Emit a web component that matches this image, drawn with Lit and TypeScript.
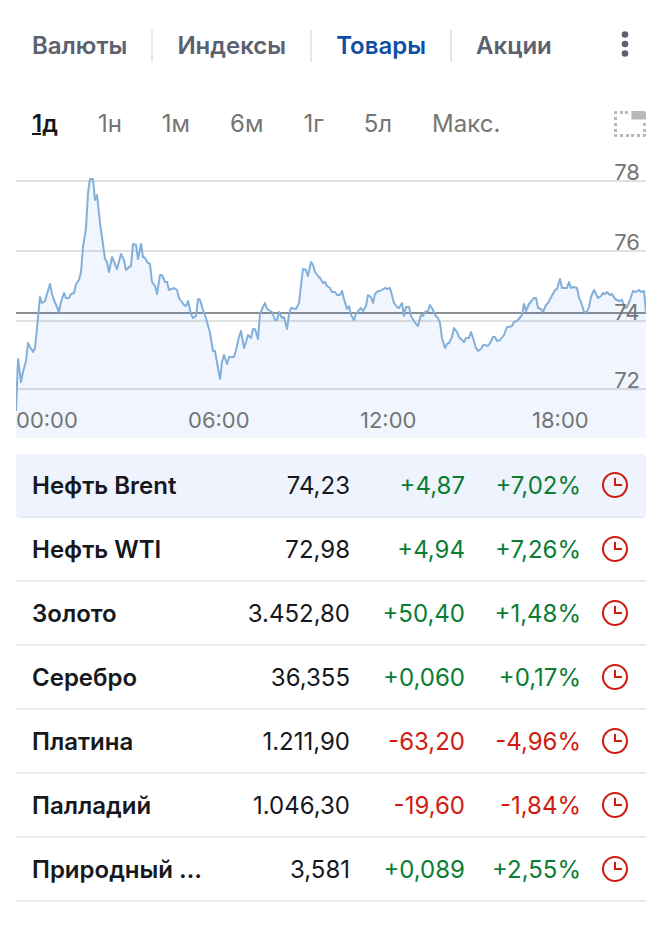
import { LitElement, html, css, svg } from "lit";
import { customElement, property, state } from "lit/decorators.js";
import { classMap } from "lit/directives/class-map.js";

interface Quote {
  name: string;
  price: string;
  change: string;
  percent: string;
}

const TABS = ["Валюты", "Индексы", "Товары", "Акции"];
const RANGES = ["1д", "1н", "1м", "6м", "1г", "5л", "Макс."];

const QUOTES: Quote[] = [
  { name: "Нефть Brent", price: "74,23", change: "+4,87", percent: "+7,02%" },
  { name: "Нефть WTI", price: "72,98", change: "+4,94", percent: "+7,26%" },
  { name: "Золото", price: "3.452,80", change: "+50,40", percent: "+1,48%" },
  { name: "Серебро", price: "36,355", change: "+0,060", percent: "+0,17%" },
  { name: "Платина", price: "1.211,90", change: "-63,20", percent: "-4,96%" },
  { name: "Палладий", price: "1.046,30", change: "-19,60", percent: "-1,84%" },
  { name: "Природный …", price: "3,581", change: "+0,089", percent: "+2,55%" },
];

// Intraday price line, in the chart's 630 x 278 coordinate space.
const LINE =
  "0,251 2,199 5,222 7,212 10,201 12,183 14,187 17,192 19,188 21,168 24,137 26,143 29,141 31,134 34,124 36,134 38,140 43,152 45,142 48,133 50,138 53,138 55,134 58,133 60,124 63,120 65,112 67,87 70,68 72,33 74,19 77,19 79,40 81,35 84,63 86,77 89,99 91,102 93,112 96,97 101,109 105,94 108,100 110,110 113,107 115,106 117,84 120,85 122,99 125,84 127,97 129,98 132,103 134,104 136,122 139,126 141,134 144,115 146,115 149,122 151,122 153,130 " +
  "158,128 161,130 163,138 168,145 170,146 172,141 175,154 177,158 180,156 182,139 184,140 187,150 190,158 194,173 197,191 199,191 204,219 206,202 208,195 211,204 213,197 218,197 220,190 223,177 225,171 228,188 230,182 232,175 235,178 237,169 239,169 242,179 244,154 247,147 249,143 251,149 256,152 259,160 261,160 263,152 266,158 268,157 271,169 273,154 275,148 280,149 283,143 285,125 287,109 290,110 292,116 295,102 297,105 299,112 302,116 304,118 307,123 309,122 311,126 314,128 " +
  "316,132 319,132 321,135 324,135 326,131 328,139 331,149 333,146 335,155 338,160 340,154 343,150 345,148 347,151 350,146 352,135 355,137 357,143 359,134 362,131 364,131 369,128 371,129 374,128 378,143 381,147 383,148 386,143 388,156 390,147 393,147 395,156 398,161 400,164 402,166 405,155 407,156 409,152 412,151 414,145 417,150 419,155 422,158 424,163 426,178 429,188 431,184 433,183 436,177 438,168 441,172 443,177 448,182 450,178 453,178 455,172 457,178 460,188 462,191 465,189 467,185 469,185 472,186 474,183 477,177 479,177 481,181 " +
  "484,180 488,175 491,167 493,167 496,166 498,162 501,161 506,155 508,144 510,151 513,144 518,138 520,138 522,148 525,149 527,152 530,145 532,143 539,130 541,129 544,119 546,128 551,128 553,122 555,128 558,127 561,128 563,138 565,142 568,152 571,152 573,147 575,137 578,130 580,134 582,138 585,136 587,133 589,134 591,132 594,135 596,134 599,139 603,141 606,140 609,148 611,147 614,140 617,131 620,132 623,130 625,132 628,131 630,153";

@customElement("price-chart")
export class PriceChart extends LitElement {
  static styles = css`
    :host {
      display: grid;
      height: 280px;
      color: #757575;
      font-size: 22px;
      line-height: 28px;
    }
    .plot,
    .prices,
    .times {
      grid-area: 1 / 1;
    }
    .plot {
      display: block;
      align-self: end;
      width: 100%;
      height: 278px;
    }
    .grid {
      stroke: #e0e0e0;
      stroke-width: 2;
    }
    .previous {
      stroke: #8b8f94;
      stroke-width: 2;
    }
    .area {
      fill: #1a66f0;
      fill-opacity: 0.065;
    }
    .line {
      fill: none;
      stroke: #83b0da;
      stroke-width: 2;
      stroke-linejoin: round;
    }
    .prices {
      display: grid;
      grid-template-rows: 70px 70px 68px 28px;
      align-content: start;
      justify-content: end;
      padding-right: 6px;
    }
    .times {
      align-self: end;
      display: grid;
      grid-template-columns: repeat(3, 172fr) 114fr;
      padding-bottom: 4px;
    }
  `;

  render() {
    return html`
      <svg
        class="plot"
        viewBox="0 0 630 278"
        preserveAspectRatio="none"
        role="img"
        aria-label="Нефть Brent, 1д"
      >
        ${[21, 91, 161, 229].map(
          (y) => svg`<line class="grid" x1="0" x2="630" y1=${y} y2=${y} />`
        )}
        <line class="previous" x1="0" x2="630" y1="153" y2="153" />
        <polygon class="area" points="${LINE} 630,278 0,278" />
        <polyline class="line" vector-effect="non-scaling-stroke" points=${LINE} />
      </svg>
      <div class="prices">
        ${[78, 76, 74, 72].map((p) => html`<span>${p}</span>`)}
      </div>
      <div class="times">
        ${["00:00", "06:00", "12:00", "18:00"].map((t) => html`<span>${t}</span>`)}
      </div>
    `;
  }
}

@customElement("quote-table")
export class QuoteTable extends LitElement {
  @property({ attribute: false }) quotes: Quote[] = [];
  @state() private selected = 0;

  static styles = css`
    :host {
      display: block;
    }
    .table {
      width: 100%;
      table-layout: fixed;
      border-collapse: separate;
      border-spacing: 0;
      font-size: 24px;
      line-height: 32px;
      color: #16181d;
    }
    .col-price {
      width: 144px;
    }
    .col-change {
      width: 115px;
    }
    .col-percent {
      width: 116px;
    }
    .col-status {
      width: 65px;
    }
    .row {
      cursor: pointer;
    }
    .cell {
      height: 60px;
      padding: 2px 0 0;
      border-bottom: 2px solid #ebebeb;
      text-align: right;
      font-weight: 400;
      white-space: nowrap;
    }
    .name {
      padding-left: 16px;
      text-align: left;
      font-weight: 600;
    }
    .status {
      height: 62px;
      padding: 0 18px 0 0;
    }
    .up {
      color: #0a7d33;
    }
    .down {
      color: #d01c0f;
    }
    .selected .cell {
      background: #eef3fd;
      border-bottom-color: #e7ebf4;
    }
    .selected .name {
      border-radius: 4px 0 0 4px;
    }
    .selected .status {
      border-radius: 0 4px 4px 0;
    }
    .clock {
      display: block;
      width: 26px;
      height: 26px;
      margin-left: auto;
      fill: none;
      stroke: #d01c0f;
      stroke-width: 2;
    }
  `;

  render() {
    return html`
      <table class="table">
        <colgroup>
          <col />
          <col class="col-price" />
          <col class="col-change" />
          <col class="col-percent" />
          <col class="col-status" />
        </colgroup>
        <tbody>
          ${this.quotes.map((q, i) => {
            const trend = {
              cell: true,
              up: q.change.startsWith("+"),
              down: q.change.startsWith("-"),
            };
            return html`
              <tr
                class=${classMap({ row: true, selected: i === this.selected })}
                @click=${() => (this.selected = i)}
              >
                <th class="cell name" scope="row">${q.name}</th>
                <td class="cell">${q.price}</td>
                <td class=${classMap(trend)}>${q.change}</td>
                <td class=${classMap(trend)}>${q.percent}</td>
                <td class="cell status">
                  <svg class="clock" viewBox="0 0 26 26" aria-hidden="true">
                    <circle cx="13" cy="13" r="12" />
                    <path d="M13 6v7h7" />
                  </svg>
                </td>
              </tr>
            `;
          })}
        </tbody>
      </table>
    `;
  }
}

@customElement("app-root")
export class AppRoot extends LitElement {
  @state() private tab = 2;
  @state() private range = 0;

  static styles = css`
    :host {
      display: block;
      min-height: 100vh;
      box-sizing: border-box;
      padding: 16px 26px 36px 16px;
      background: #fff;
      font-family: Inter, "Liberation Sans", sans-serif;
    }
    .tabs,
    .ranges {
      display: flex;
      align-items: center;
      padding-left: 16px;
    }
    .tabs {
      height: 60px;
    }
    .tab {
      padding: 0 24px;
      border-left: 2px solid #e6e7e9;
      color: #5b616e;
      font-size: 24px;
      font-weight: 600;
      line-height: 32px;
      text-decoration: none;
    }
    .tab:first-child {
      padding-left: 0;
      border-left: 0;
    }
    .tab.active {
      color: #0f4fa3;
    }
    .button {
      padding: 0;
      border: 0;
      background: none;
      color: inherit;
      font: inherit;
      cursor: pointer;
    }
    .more {
      margin-left: auto;
      padding: 0 16px;
    }
    .dots {
      display: block;
      width: 10px;
      height: 32px;
      fill: #5b616e;
    }
    .ranges {
      gap: 40px;
      height: 60px;
      margin: 18px 0 4px;
      color: #757575;
      font-size: 24px;
      line-height: 32px;
    }
    .range.active {
      color: #16181d;
      font-weight: 600;
      text-decoration: underline;
      text-decoration-thickness: 2px;
    }
    .detach {
      margin-left: auto;
    }
    .frame {
      display: block;
      width: 32px;
      height: 26px;
      fill: #b8b8b8;
    }
    .quotes {
      margin-top: 16px;
    }
  `;

  render() {
    return html`
      <nav class="tabs">
        ${TABS.map(
          (t, i) => html`<a
            href="#"
            class=${classMap({ tab: true, active: i === this.tab })}
            @click=${(e: Event) => {
              e.preventDefault();
              this.tab = i;
            }}
            >${t}</a
          >`
        )}
        <button class="button more" aria-label="Ещё">
          <svg class="dots" viewBox="0 0 10 32">
            <circle cx="5" cy="4.500" r="3.300" />
            <circle cx="5" cy="14" r="3.300" />
            <circle cx="5" cy="23.500" r="3.300" />
          </svg>
        </button>
      </nav>
      <div class="ranges">
        ${RANGES.map(
          (r, i) => html`<button
            class=${classMap({ button: true, range: true, active: i === this.range })}
            aria-pressed=${i === this.range}
            @click=${() => (this.range = i)}
          >
            ${r}
          </button>`
        )}
        <button class="button detach" aria-label="Открепить">
          <svg class="frame" viewBox="0 0 32 26">
            <path d="M17.500 0H30a2 2 0 0 1 2 2v6.500H17.500z" />
            <path
              d="M1 0h2v3H0V1zM6 0h3v3H6zM11 0h3v3h-3zM0 6h3v3H0zM0 12h3v3H0zM0 18h3v3H0zM29 12h3v3h-3zM29 18h3v3h-3zM0 23h3v3H1l-1-1zM6 23h3v3H6zM12 23h3v3h-3zM17 23h3v3h-3zM23 23h3v3h-3zM29 23h3v2l-1 1h-2z"
            />
          </svg>
        </button>
      </div>
      <price-chart></price-chart>
      <quote-table class="quotes" .quotes=${QUOTES}></quote-table>
    `;
  }
}
